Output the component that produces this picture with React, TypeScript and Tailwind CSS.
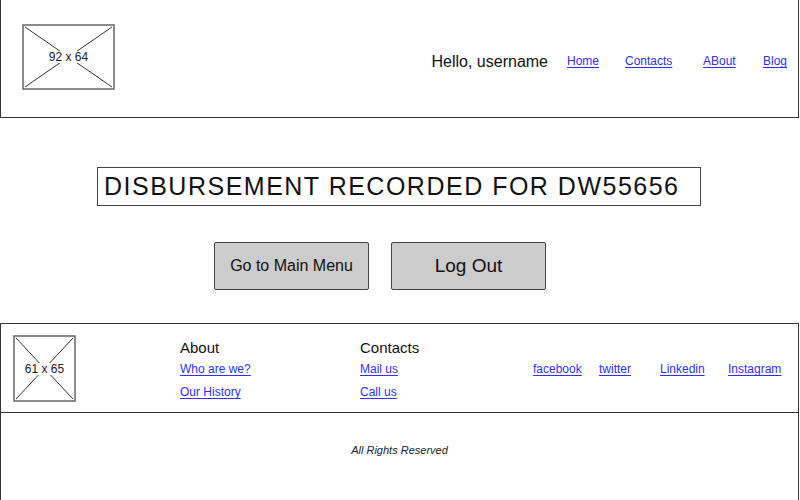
import React from 'react';

function Placeholder({ w, h, label }: { w: number; h: number; label: string }) {
  return (
    <div className="relative shrink-0" style={{ width: w, height: h }}>
      <svg width={w} height={h} className="absolute inset-0">
        <rect x="1" y="1" width={w - 2} height={h - 2} fill="white" stroke="#666" strokeWidth="1.5" />
        <line x1="3" y1="3" x2={w - 3} y2={h - 3} stroke="#333" strokeWidth="1" />
        <line x1={w - 3} y1="3" x2="3" y2={h - 3} stroke="#333" strokeWidth="1" />
      </svg>
      <div className="absolute inset-0 flex items-center justify-center">
        <span className="bg-white px-[1px] text-[12px] leading-none text-[#222]">{label}</span>
      </div>
    </div>
  );
}

const link = 'text-[#2f2fff] underline underline-offset-2';

export default function App() {
  return (
    <div
      className="w-[800px] h-[500px] overflow-hidden bg-white text-[#111]"
      style={{ fontFamily: '"Liberation Sans", Arial, sans-serif' }}
    >
      {/* header */}
      <div className="w-[799px] h-[118px] border-l border-r border-b border-[#333] flex items-start pl-[21px]">
        <div className="mt-[24px]">
          <Placeholder w={93} h={66} label="92 x 64" />
        </div>
        <div className="ml-auto flex items-center mt-[50px] pr-[11px]">
          <span className="text-[16px] mr-[19px]">Hello, username</span>
          <a className={`${link} text-[12px] mr-[26px] mt-[-2px] w-[32px]`}>Home</a>
          <a className={`${link} text-[12px] mr-[28px] mt-[-2px] w-[50px]`}>Contacts</a>
          <a className={`${link} text-[12px] mr-[26px] mt-[-2px] w-[34px]`}>ABout</a>
          <a className={`${link} text-[12px] mt-[-2px] w-[24px]`}>Blog</a>
        </div>
      </div>

      {/* main */}
      <div className="h-[205px] flex flex-col items-center">
        <div className="mt-[49px] ml-[-2px] w-[604px] h-[39px] border border-[#444] flex items-center pl-[6px]">
          <span className="text-[25px] leading-none tracking-[1.5px]">DISBURSEMENT RECORDED FOR DW55656</span>
        </div>
        <div className="mt-[36px] flex gap-[22px] ml-[-40px]">
          <button className="w-[155px] h-[48px] bg-[#cccccc] border border-[#444] rounded-[2px] text-[16px]">
            Go to Main Menu
          </button>
          <button className="w-[155px] h-[48px] bg-[#cccccc] border border-[#444] rounded-[2px] text-[19px]">
            Log Out
          </button>
        </div>
      </div>

      {/* footer */}
      <div className="w-[799px] h-[90px] border border-[#333] flex items-start pl-[12px]">
        <div className="mt-[11px]">
          <Placeholder w={63} h={67} label="61 x 65" />
        </div>
        <div className="ml-[104px] w-[180px] flex flex-col mt-[14px]">
          <span className="text-[15px] leading-[20px]">About</span>
          <a className={`${link} text-[12px] mt-[2px]`}>Who are we?</a>
          <a className={`${link} text-[12px] mt-[5px]`}>Our History</a>
        </div>
        <div className="flex flex-col mt-[14px]">
          <span className="text-[15px] leading-[20px]">Contacts</span>
          <a className={`${link} text-[12px] mt-[2px]`}>Mail us</a>
          <a className={`${link} text-[12px] mt-[5px]`}>Call us</a>
        </div>
        <div className="ml-auto mt-[36px] pr-[12px] flex">
          <a className={`${link} text-[12px] w-[66px]`}>facebook</a>
          <a className={`${link} text-[12px] w-[61px]`}>twitter</a>
          <a className={`${link} text-[12px] w-[68px]`}>Linkedin</a>
          <a className={`${link} text-[12px] w-[58px]`}>Instagram</a>
        </div>
      </div>

      {/* bottom */}
      <div className="w-[799px] h-[90px] border-l border-r border-[#333] flex justify-center pt-[29px]">
        <span className="text-[11px] italic text-[#222]">All Rights Reserved</span>
      </div>
    </div>
  );
}
